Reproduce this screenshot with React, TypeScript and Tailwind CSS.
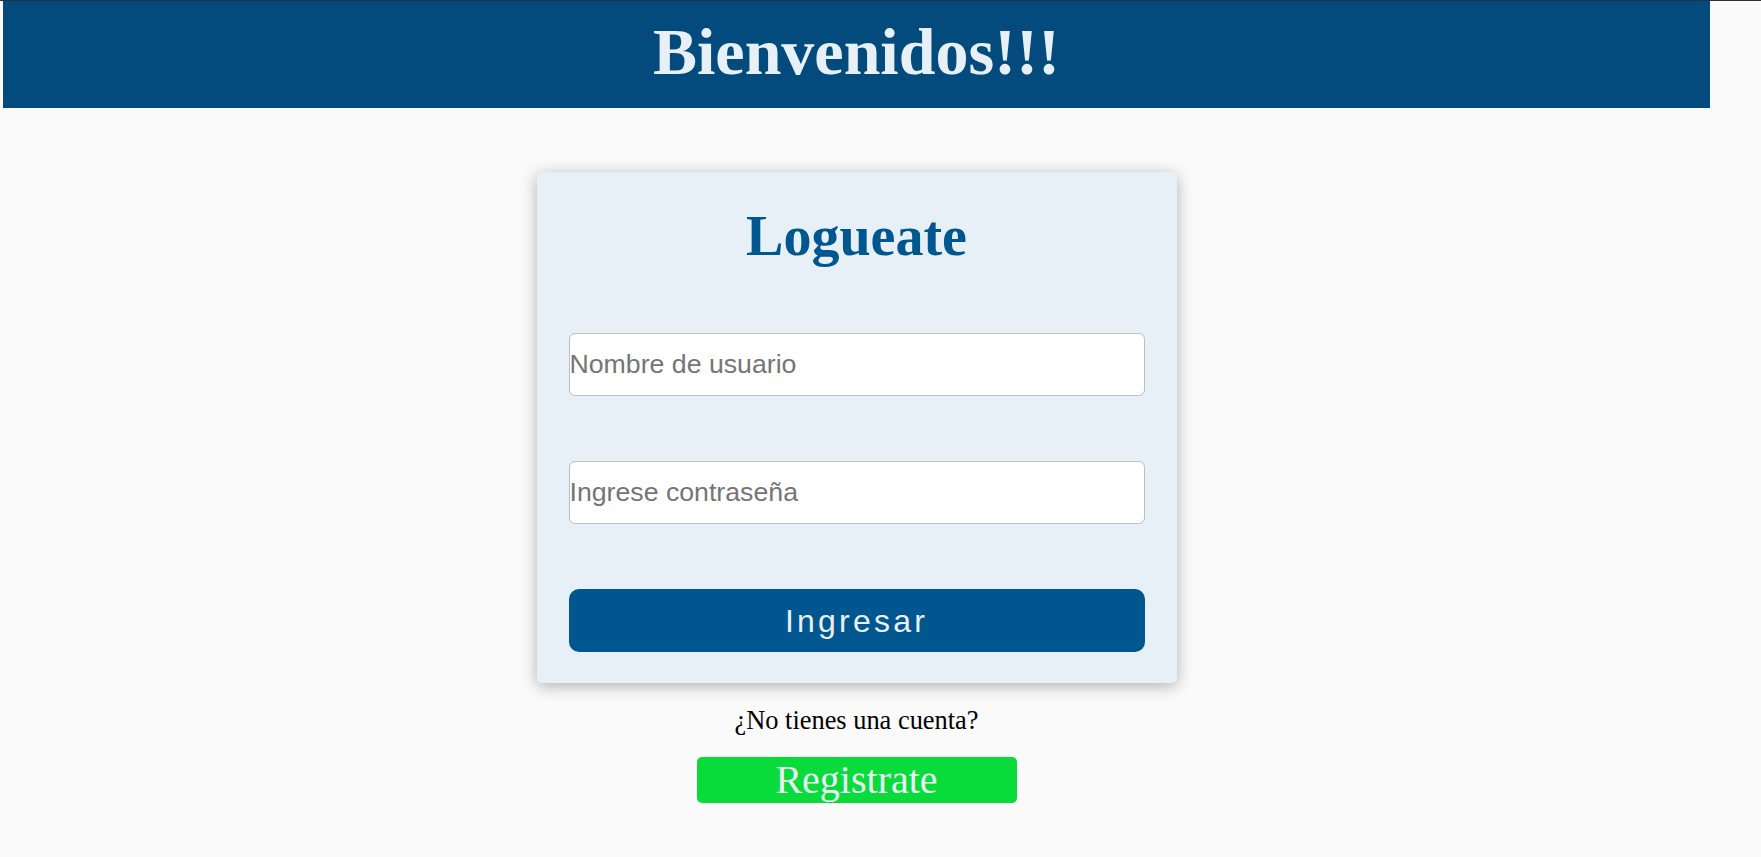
import React from 'react';

export default function App() {
  return (
    <div className="min-h-[857px] w-full bg-[#fafafa]">
      {/* top line */}
      <div className="h-px w-full bg-[#2a3040]" />

      <div className="ml-[3px] flex w-[1707px] flex-col items-center">
        {/* Header */}
        <header className="flex h-[107px] w-full items-start justify-center bg-[#024b7c]">
          <h1 className="mt-[13px] font-['Liberation_Serif',serif] text-[66px] font-bold leading-[76px] text-[#e8f0f7]">
            Bienvenidos!!!
          </h1>
        </header>

        {/* Login card */}
        <div className="mt-[64px] flex w-[640px] flex-col rounded-[5px] bg-[#e8f0f7] px-[32px] pt-[32px] pb-[31px] shadow-[0_3px_16px_rgba(0,0,0,0.3)]">
          <h2 className="text-center font-['Liberation_Serif',serif] text-[56px] font-bold leading-[64px] text-[#00568f]">
            Logueate
          </h2>

          <input
            type="text"
            placeholder="Nombre de usuario"
            className="mt-[65px] h-[63px] w-full rounded-[6px] border border-[#b9bfc9] bg-white font-['Liberation_Sans',Arial,sans-serif] text-[26.7px] text-[#333] outline-none placeholder:text-[#757575]"
          />

          <input
            type="password"
            placeholder="Ingrese contraseña"
            className="mt-[65px] h-[63px] w-full rounded-[6px] border border-[#b9bfc9] bg-white font-['Liberation_Sans',Arial,sans-serif] text-[26.7px] text-[#333] outline-none placeholder:text-[#757575]"
          />

          <button className="mt-[65px] h-[63px] w-full rounded-[10px] bg-[#00568f] font-['Liberation_Sans',Arial,sans-serif] text-[32px] tracking-[3.2px] text-[#e8f0f7]">
            Ingresar
          </button>
        </div>

        {/* Register */}
        <p className="mt-[22px] font-['Liberation_Serif',serif] text-[26.4px] leading-[30px] text-black">
          ¿No tienes una cuenta?
        </p>
        <button className="mt-[22px] flex h-[46px] w-[320px] items-center justify-center rounded-[5px] bg-[#09dc3a] font-['Liberation_Serif',serif] text-[40px] leading-[44px] text-[#e8f0f7]">
          Registrate
        </button>
      </div>
    </div>
  );
}
